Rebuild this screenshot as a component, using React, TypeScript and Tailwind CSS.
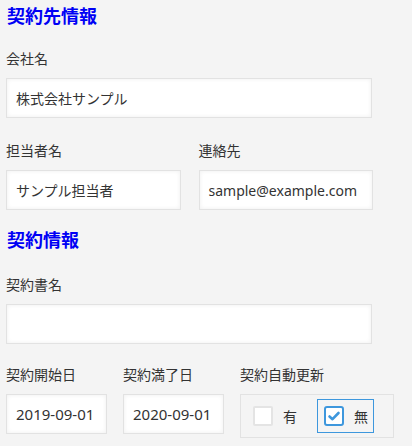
import React from "react";

const font = "font-['Noto_Sans','Noto_Sans_CJK_JP',sans-serif]";

function Field({ value, className = "" }: { value?: string; className?: string }) {
  return (
    <div
      className={`flex h-[40px] items-center border border-[#e2e2e2] bg-white px-[9px] text-[14px] text-[#333] shadow-[inset_0_0_4px_rgba(0,0,0,0.07)] ${className}`}
    >
      {value}
    </div>
  );
}

function Label({ children }: { children: React.ReactNode }) {
  return <div className="mb-[9px] text-[14px] leading-[20px] text-[#333]">{children}</div>;
}

function Check({ checked }: { checked: boolean }) {
  return checked ? (
    <div className="flex h-[20px] w-[20px] items-center justify-center rounded-[3px] border-2 border-[#3d97dd] bg-white">
      <svg width="14" height="14" viewBox="0 0 14 14">
        <polyline
          points="2.5,7.5 5.5,10.2 11.5,4"
          fill="none"
          stroke="#3d97dd"
          strokeWidth="2.6"
          strokeLinecap="round"
          strokeLinejoin="round"
        />
      </svg>
    </div>
  ) : (
    <div className="h-[20px] w-[20px] rounded-[2px] border-2 border-[#e4e4e4] bg-white" />
  );
}

export default function App() {
  return (
    <div className={`min-h-screen bg-[#f4f4f4] px-[6px] pt-[3px] ${font}`}>
      <h2 className="pl-[1px] text-[18px] font-bold leading-[26px] text-[#0000f5]">契約先情報</h2>

      <div className="mt-[20px] w-[366px]">
        <Label>会社名</Label>
        <Field value="株式会社サンプル" />
      </div>

      <div className="mt-[23px] grid w-[367px] grid-cols-2 gap-x-[18px]">
        <div>
          <Label>担当者名</Label>
          <Field value="サンプル担当者" />
        </div>
        <div>
          <Label>連絡先</Label>
          <Field value="sample@example.com" className="text-[14.5px]" />
        </div>
      </div>

      <h2 className="mt-[17px] pl-[1px] text-[18px] font-bold leading-[26px] text-[#0000f5]">契約情報</h2>

      <div className="mt-[22px] w-[366px]">
        <Label>契約書名</Label>
        <Field />
      </div>

      <div className="mt-[21px] flex gap-[16px]">
        <div className="w-[101px]">
          <Label>契約開始日</Label>
          <Field value="2019-09-01" className="text-[15px]" />
        </div>
        <div className="w-[101px]">
          <Label>契約満了日</Label>
          <Field value="2020-09-01" className="text-[15px]" />
        </div>
        <div className="w-[154px]">
          <Label>契約自動更新</Label>
          <div className="flex h-[44px] items-center gap-[15px] border border-[#e2e2e2] pl-[5px]">
            <div className="flex h-[34px] w-[56px] items-center gap-[10px] border border-transparent pl-[6px] text-[14px] text-[#333]">
              <Check checked={false} />
              <span>有</span>
            </div>
            <div className="flex h-[34px] w-[57px] items-center gap-[10px] border border-[#3d97dd] pl-[6px] text-[14px] text-[#333]">
              <Check checked={true} />
              <span>無</span>
            </div>
          </div>
        </div>
      </div>
    </div>
  );
}
